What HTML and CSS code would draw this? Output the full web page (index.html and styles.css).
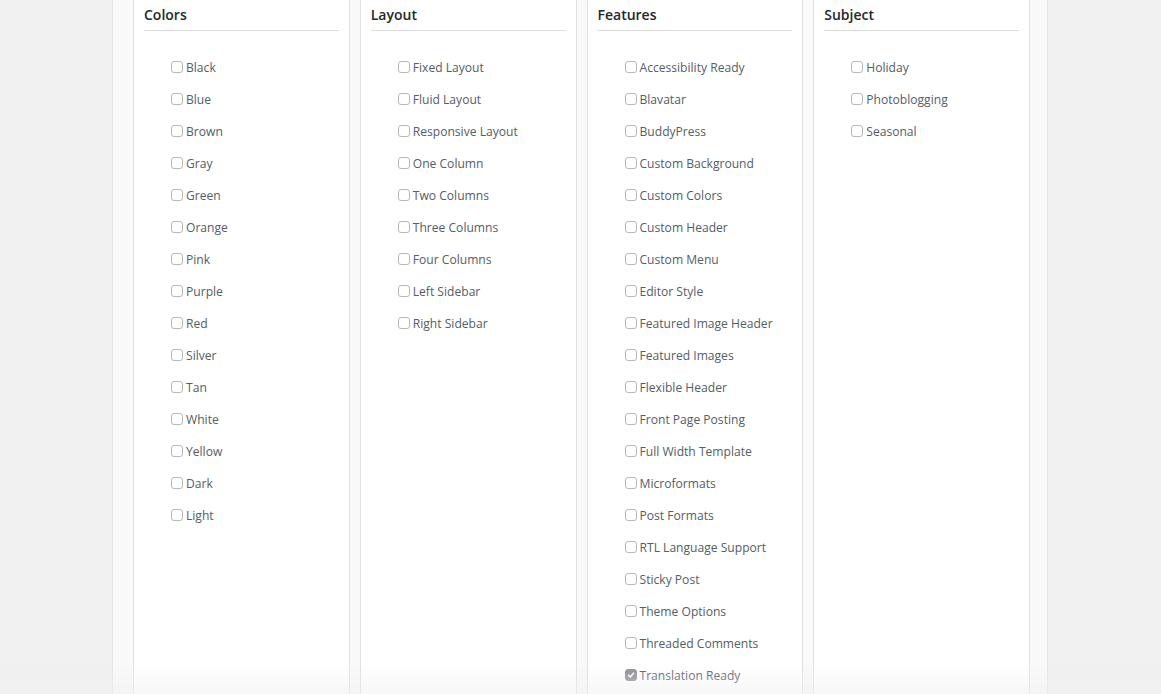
FILE: index.html
```html
<!DOCTYPE html>
<html lang="en">
<head>
    <meta charset="UTF-8">
    <meta name="viewport" content="width=device-width, initial-scale=1.0">
    <title>Feature Filter</title>
    <link rel="stylesheet" href="styles.css">
</head>
<body>
    <div class="filter-panel">
        <div class="filter-group">
            <h4>Colors</h4>
            <ul>
                <li><span class="check"></span>Black</li>
                <li><span class="check"></span>Blue</li>
                <li><span class="check"></span>Brown</li>
                <li><span class="check"></span>Gray</li>
                <li><span class="check"></span>Green</li>
                <li><span class="check"></span>Orange</li>
                <li><span class="check"></span>Pink</li>
                <li><span class="check"></span>Purple</li>
                <li><span class="check"></span>Red</li>
                <li><span class="check"></span>Silver</li>
                <li><span class="check"></span>Tan</li>
                <li><span class="check"></span>White</li>
                <li><span class="check"></span>Yellow</li>
                <li><span class="check"></span>Dark</li>
                <li><span class="check"></span>Light</li>
            </ul>
        </div>
        <div class="filter-group">
            <h4>Layout</h4>
            <ul>
                <li><span class="check"></span>Fixed Layout</li>
                <li><span class="check"></span>Fluid Layout</li>
                <li><span class="check"></span>Responsive Layout</li>
                <li><span class="check"></span>One Column</li>
                <li><span class="check"></span>Two Columns</li>
                <li><span class="check"></span>Three Columns</li>
                <li><span class="check"></span>Four Columns</li>
                <li><span class="check"></span>Left Sidebar</li>
                <li><span class="check"></span>Right Sidebar</li>
            </ul>
        </div>
        <div class="filter-group">
            <h4>Features</h4>
            <ul>
                <li><span class="check"></span>Accessibility Ready</li>
                <li><span class="check"></span>Blavatar</li>
                <li><span class="check"></span>BuddyPress</li>
                <li><span class="check"></span>Custom Background</li>
                <li><span class="check"></span>Custom Colors</li>
                <li><span class="check"></span>Custom Header</li>
                <li><span class="check"></span>Custom Menu</li>
                <li><span class="check"></span>Editor Style</li>
                <li><span class="check"></span>Featured Image Header</li>
                <li><span class="check"></span>Featured Images</li>
                <li><span class="check"></span>Flexible Header</li>
                <li><span class="check"></span>Front Page Posting</li>
                <li><span class="check"></span>Full Width Template</li>
                <li><span class="check"></span>Microformats</li>
                <li><span class="check"></span>Post Formats</li>
                <li><span class="check"></span>RTL Language Support</li>
                <li><span class="check"></span>Sticky Post</li>
                <li><span class="check"></span>Theme Options</li>
                <li><span class="check"></span>Threaded Comments</li>
                <li><span class="check checked"><svg viewBox="0 0 12 12" width="12" height="12"><path d="M3 6.3 5.1 8.4 9 3.8" fill="none" stroke="#fff" stroke-width="1.8" stroke-linecap="round" stroke-linejoin="round"/></svg></span>Translation Ready</li>
            </ul>
        </div>
        <div class="filter-group">
            <h4>Subject</h4>
            <ul>
                <li><span class="check"></span>Holiday</li>
                <li><span class="check"></span>Photoblogging</li>
                <li><span class="check"></span>Seasonal</li>
            </ul>
        </div>
    </div>
    <div class="fade"></div>
</body>
</html>
```

FILE: styles.css
```css
* {
    box-sizing: border-box;
    margin: 0;
    padding: 0;
}

body {
    font-family: 'Open Sans', sans-serif;
    background-color: #f1f1f1;
    color: #444;
    height: 694px;
    overflow: hidden;
}

.filter-panel {
    margin-left: 112px;
    width: 936px;
    min-height: 100vh;
    padding: 0 17px 0 20px;
    background-color: #f9f9f9;
    border-left: 1px solid #e5e5e5;
    border-right: 1px solid #e5e5e5;
    display: grid;
    grid-template-columns: repeat(4, 1fr);
    gap: 10px;
}

.filter-group {
    background-color: #fff;
    border-left: 1px solid #e1e1e1;
    border-right: 1px solid #e1e1e1;
    padding: 0 10px;
    min-height: 100vh;
}

.filter-group h4 {
    font-size: 14px;
    font-weight: 600;
    color: #23282d;
    line-height: 20px;
    padding: 5px 0 5px;
    border-bottom: 1px solid #ddd;
}

.filter-group ul {
    list-style: none;
    margin-top: 20px;
    padding-left: 27px;
}

.filter-group li {
    display: flex;
    align-items: center;
    height: 32px;
    font-size: 12.1px;
    color: #555d66;
}

.check {
    width: 12px;
    height: 12px;
    border: 1px solid #b4b9be;
    border-radius: 3px;
    background: #fff;
    margin-right: 3px;
    display: flex;
    align-items: center;
    justify-content: center;
}

.check.checked {
    background: #8c8f94;
    border-color: #8c8f94;
}

.fade {
    position: fixed;
    left: 0;
    right: 0;
    bottom: 0;
    height: 28px;
    background: linear-gradient(to bottom, rgba(241, 241, 241, 0), rgba(241, 241, 241, 0.55));
    pointer-events: none;
}
```
